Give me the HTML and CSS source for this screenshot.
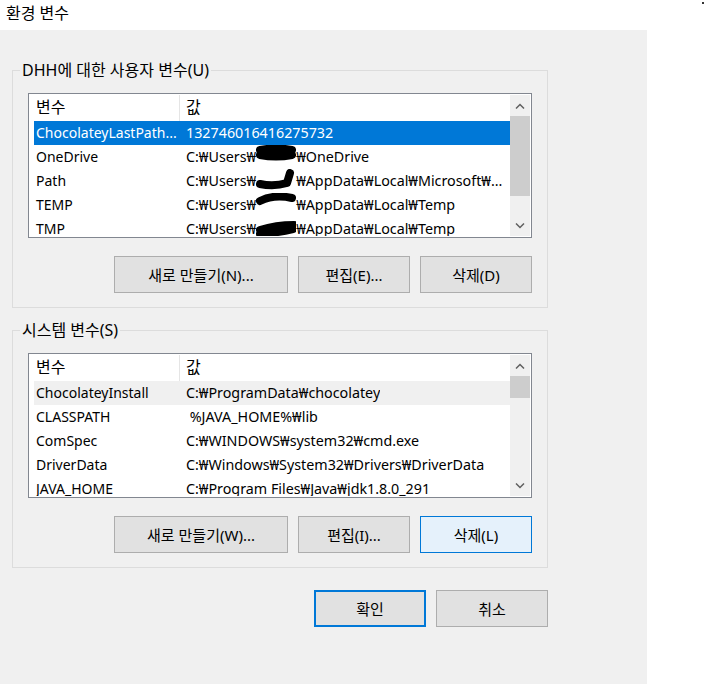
FILE: index.html
```html
<!DOCTYPE html>
<html lang="ko">
<head>
    <meta charset="UTF-8">
    <title>환경 변수</title>
    <link rel="stylesheet" href="styles.css">
</head>
<body>
    <div class="titlebar">환경 변수</div>
    <div class="corner-dot"></div>
    <div class="dialog">
        <fieldset class="group">
            <legend>DHH에 대한 사용자 변수(U)</legend>
            <div class="listview">
                <div class="list-body">
                    <div class="list-header">
                        <span class="col-name">변수</span>
                        <span class="col-value">값</span>
                    </div>
                    <div class="row selected">
                        <span class="col-name">ChocolateyLastPath...</span>
                        <span class="col-value">132746016416275732</span>
                    </div>
                    <div class="row">
                        <span class="col-name">OneDrive</span>
                        <span class="col-value">C:₩Users₩<span class="redact"><svg viewBox="0 0 40 24"><path d="M4 6 Q20 3 36 6 M4 11 Q20 14 36 11" /></svg></span>₩OneDrive</span>
                    </div>
                    <div class="row">
                        <span class="col-name">Path</span>
                        <span class="col-value">C:₩Users₩<span class="redact"><svg viewBox="0 0 40 24"><path d="M4 16 Q18 19 31 15 L34 5" /></svg></span>₩AppData₩Local₩Microsoft₩...</span>
                    </div>
                    <div class="row">
                        <span class="col-name">TEMP</span>
                        <span class="col-value">C:₩Users₩<span class="redact"><svg viewBox="0 0 40 24"><path d="M4 9 Q18 2 36 6" /></svg></span>₩AppData₩Local₩Temp</span>
                    </div>
                    <div class="row">
                        <span class="col-name">TMP</span>
                        <span class="col-value">C:₩Users₩<span class="redact"><svg viewBox="0 0 40 24"><path d="M4 14 Q20 9 38 9 M4 18 Q20 17 37 13" /></svg></span>₩AppData₩Local₩Temp</span>
                    </div>
                </div>
                <div class="scrollbar">
                    <div class="arrow"><svg viewBox="0 0 10 6"><polyline points="1,5.5 5,1.5 9,5.5" /></svg></div>
                    <div class="track"><div class="thumb thumb-user"></div></div>
                    <div class="arrow"><svg viewBox="0 0 10 6"><polyline points="1,0.5 5,4.5 9,0.5" /></svg></div>
                </div>
            </div>
            <div class="button-row">
                <button class="btn btn-wide">새로 만들기(N)...</button>
                <button class="btn">편집(E)...</button>
                <button class="btn">삭제(D)</button>
            </div>
        </fieldset>

        <fieldset class="group">
            <legend>시스템 변수(S)</legend>
            <div class="listview">
                <div class="list-body">
                    <div class="list-header">
                        <span class="col-name">변수</span>
                        <span class="col-value">값</span>
                    </div>
                    <div class="row hover">
                        <span class="col-name">ChocolateyInstall</span>
                        <span class="col-value">C:₩ProgramData₩chocolatey</span>
                    </div>
                    <div class="row">
                        <span class="col-name">CLASSPATH</span>
                        <span class="col-value">&nbsp;%JAVA_HOME%₩lib</span>
                    </div>
                    <div class="row">
                        <span class="col-name">ComSpec</span>
                        <span class="col-value">C:₩WINDOWS₩system32₩cmd.exe</span>
                    </div>
                    <div class="row">
                        <span class="col-name">DriverData</span>
                        <span class="col-value">C:₩Windows₩System32₩Drivers₩DriverData</span>
                    </div>
                    <div class="row">
                        <span class="col-name">JAVA_HOME</span>
                        <span class="col-value">C:₩Program Files₩Java₩jdk1.8.0_291</span>
                    </div>
                </div>
                <div class="scrollbar">
                    <div class="arrow"><svg viewBox="0 0 10 6"><polyline points="1,5.5 5,1.5 9,5.5" /></svg></div>
                    <div class="track"><div class="thumb thumb-system"></div></div>
                    <div class="arrow"><svg viewBox="0 0 10 6"><polyline points="1,0.5 5,4.5 9,0.5" /></svg></div>
                </div>
            </div>
            <div class="button-row">
                <button class="btn btn-wide">새로 만들기(W)...</button>
                <button class="btn">편집(I)...</button>
                <button class="btn btn-hover">삭제(L)</button>
            </div>
        </fieldset>

        <div class="dialog-buttons">
            <button class="btn btn-default">확인</button>
            <button class="btn">취소</button>
        </div>
    </div>
</body>
</html>
```

FILE: styles.css
```css
body {
    margin: 0;
    background-color: #fff;
    font-family: "Noto Sans", "Noto Sans CJK KR", sans-serif;
    font-size: 14px;
    color: #000;
}
.titlebar {
    height: 30px;
    line-height: 26px;
    padding-left: 6px;
    font-size: 16px;
}
.corner-dot {
    position: absolute;
    top: 2px;
    left: 702px;
    width: 2px;
    height: 2px;
    background-color: #333;
}
.dialog {
    width: 623px;
    height: 624px;
    padding: 30px 12px 0;
    background-color: #f0f0f0;
}
.group {
    margin: 0 0 12px;
    padding: 13px 15px 14px;
    border: 1px solid #dcdcdc;
    width: 504px;
}
.group legend {
    margin-left: -8px;
    padding: 0 2px;
    line-height: 20px;
    font-size: 16px;
}
.listview {
    display: flex;
    height: 141px;
    padding: 1px;
    border: 1px solid #828790;
    background-color: #fff;
}
.list-body {
    flex: 1;
    overflow: hidden;
}
.list-header {
    display: flex;
    height: 26px;
    line-height: 24px;
    margin-left: 4px;
    font-size: 16px;
}
.list-header .col-name {
    width: 143px;
    border-right: 1px solid #e5e5e5;
}
.row {
    display: flex;
    height: 24px;
    line-height: 23px;
    margin-left: 4px;
    font-size: 14.3px;
    white-space: nowrap;
}
.col-name {
    width: 144px;
    padding-left: 2px;
    flex-shrink: 0;
}
.row .col-name {
    font-size: 14px;
}
.col-value {
    padding-left: 6px;
    overflow: hidden;
}
.row.selected {
    background-color: #0078d7;
    color: #fff;
}
.row.hover {
    background-color: #f0f0f0;
}
.redact {
    display: inline-block;
    width: 40px;
    height: 24px;
    vertical-align: top;
}
.redact svg {
    width: 40px;
    height: 24px;
    margin-top: -1px;
}
.redact path {
    fill: none;
    stroke: #000;
    stroke-width: 8;
    stroke-linecap: round;
    stroke-linejoin: round;
}
.scrollbar {
    width: 20px;
    display: flex;
    flex-direction: column;
    background-color: #f0f0f0;
}
.arrow {
    height: 21px;
    display: flex;
    align-items: center;
    justify-content: center;
}
.arrow svg {
    width: 10px;
    height: 6px;
}
.arrow polyline {
    fill: none;
    stroke: #606060;
    stroke-width: 1.5;
}
.track {
    flex: 1;
}
.thumb {
    background-color: #cdcdcd;
}
.thumb-user {
    height: 80px;
}
.thumb-system {
    height: 22px;
}
.button-row {
    display: flex;
    justify-content: flex-end;
    gap: 10px;
    margin-top: 18px;
}
.btn {
    width: 112px;
    height: 37px;
    padding: 0;
    background-color: #e1e1e1;
    border: 1px solid #adadad;
    font-family: inherit;
    font-size: 15px;
    color: #000;
}
.btn-wide {
    width: 174px;
}
.btn-hover {
    background-color: #e5f1fb;
    border-color: #0078d7;
}
.btn-default {
    border: 2px solid #0078d7;
}
.dialog-buttons {
    display: flex;
    justify-content: flex-end;
    gap: 10px;
    width: 536px;
    margin-top: 22px;
}
```
